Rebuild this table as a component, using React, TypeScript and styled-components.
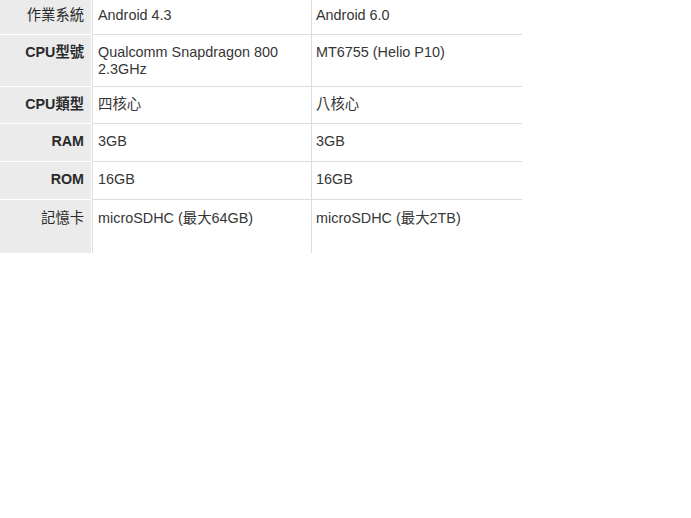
import React from "react";
import styled, { createGlobalStyle } from "styled-components";

const Global = createGlobalStyle`
  html, body { margin: 0; padding: 0; background: #fff; }
  * { box-sizing: border-box; }
  body {
    font-family: "Liberation Sans", Arial, "Noto Sans CJK TC", sans-serif;
    font-size: 14px;
    color: #333;
  }
`;

const SpecTable = styled.table`
  border-collapse: separate;
  border-spacing: 0;
  table-layout: fixed;
  width: 522px;
`;

const Row = styled.tr<{ $h: number }>`
  height: ${(p) => p.$h}px;
`;

const Label = styled.th<{ $bold: boolean; $pad: number; $last?: boolean }>`
  width: 92px;
  background: #ebebeb;
  border-right: 1px solid #fff;
  border-bottom: ${(p) => (p.$last ? "none" : "1px solid #fff")};
  text-align: right;
  vertical-align: top;
  padding: ${(p) => p.$pad}px 7px 0 4px;
  line-height: 17px;
  font-size: 14.3px;
  font-weight: ${(p) => (p.$bold ? 700 : 400)};
  color: #2a2a2a;
  white-space: nowrap;
`;

const Cell = styled.td<{ $first?: boolean; $pad: number; $last?: boolean }>`
  width: ${(p) => (p.$first ? 220 : 210)}px;
  border-left: ${(p) => (p.$first ? "1px solid #ddd" : "none")};
  border-right: ${(p) => (p.$first ? "1px solid #ddd" : "none")};
  border-bottom: ${(p) => (p.$last ? "none" : "1px solid #ddd")};
  vertical-align: top;
  text-align: left;
  padding: ${(p) => p.$pad}px 4px 0 ${(p) => (p.$first ? 5 : 4)}px;
  line-height: 16.5px;
  font-size: 14.4px;
  color: #363636;
`;

type Spec = {
  label: string;
  bold: boolean;
  a: string;
  b: string;
  h: number;
  pad: number;
};

const specs: Spec[] = [
  { label: "作業系統", bold: false, a: "Android 4.3", b: "Android 6.0", h: 35, pad: 7 },
  { label: "CPU型號", bold: true, a: "Qualcomm Snapdragon 800 2.3GHz", b: "MT6755 (Helio P10)", h: 52, pad: 9 },
  { label: "CPU類型", bold: true, a: "四核心", b: "八核心", h: 37, pad: 9 },
  { label: "RAM", bold: true, a: "3GB", b: "3GB", h: 38, pad: 9 },
  { label: "ROM", bold: true, a: "16GB", b: "16GB", h: 38, pad: 9 },
  { label: "記憶卡", bold: false, a: "microSDHC (最大64GB)", b: "microSDHC (最大2TB)", h: 53, pad: 10 },
];

export default function App() {
  return (
    <>
      <Global />
      <SpecTable>
        <tbody>
          {specs.map((s, i) => {
            const last = i === specs.length - 1;
            return (
              <Row key={s.label} $h={s.h}>
                <Label $bold={s.bold} $pad={s.pad} $last={last}>
                  {s.label}
                </Label>
                <Cell $first $pad={s.pad} $last={last}>
                  {s.a}
                </Cell>
                <Cell $pad={s.pad} $last={last}>
                  {s.b}
                </Cell>
              </Row>
            );
          })}
        </tbody>
      </SpecTable>
    </>
  );
}
